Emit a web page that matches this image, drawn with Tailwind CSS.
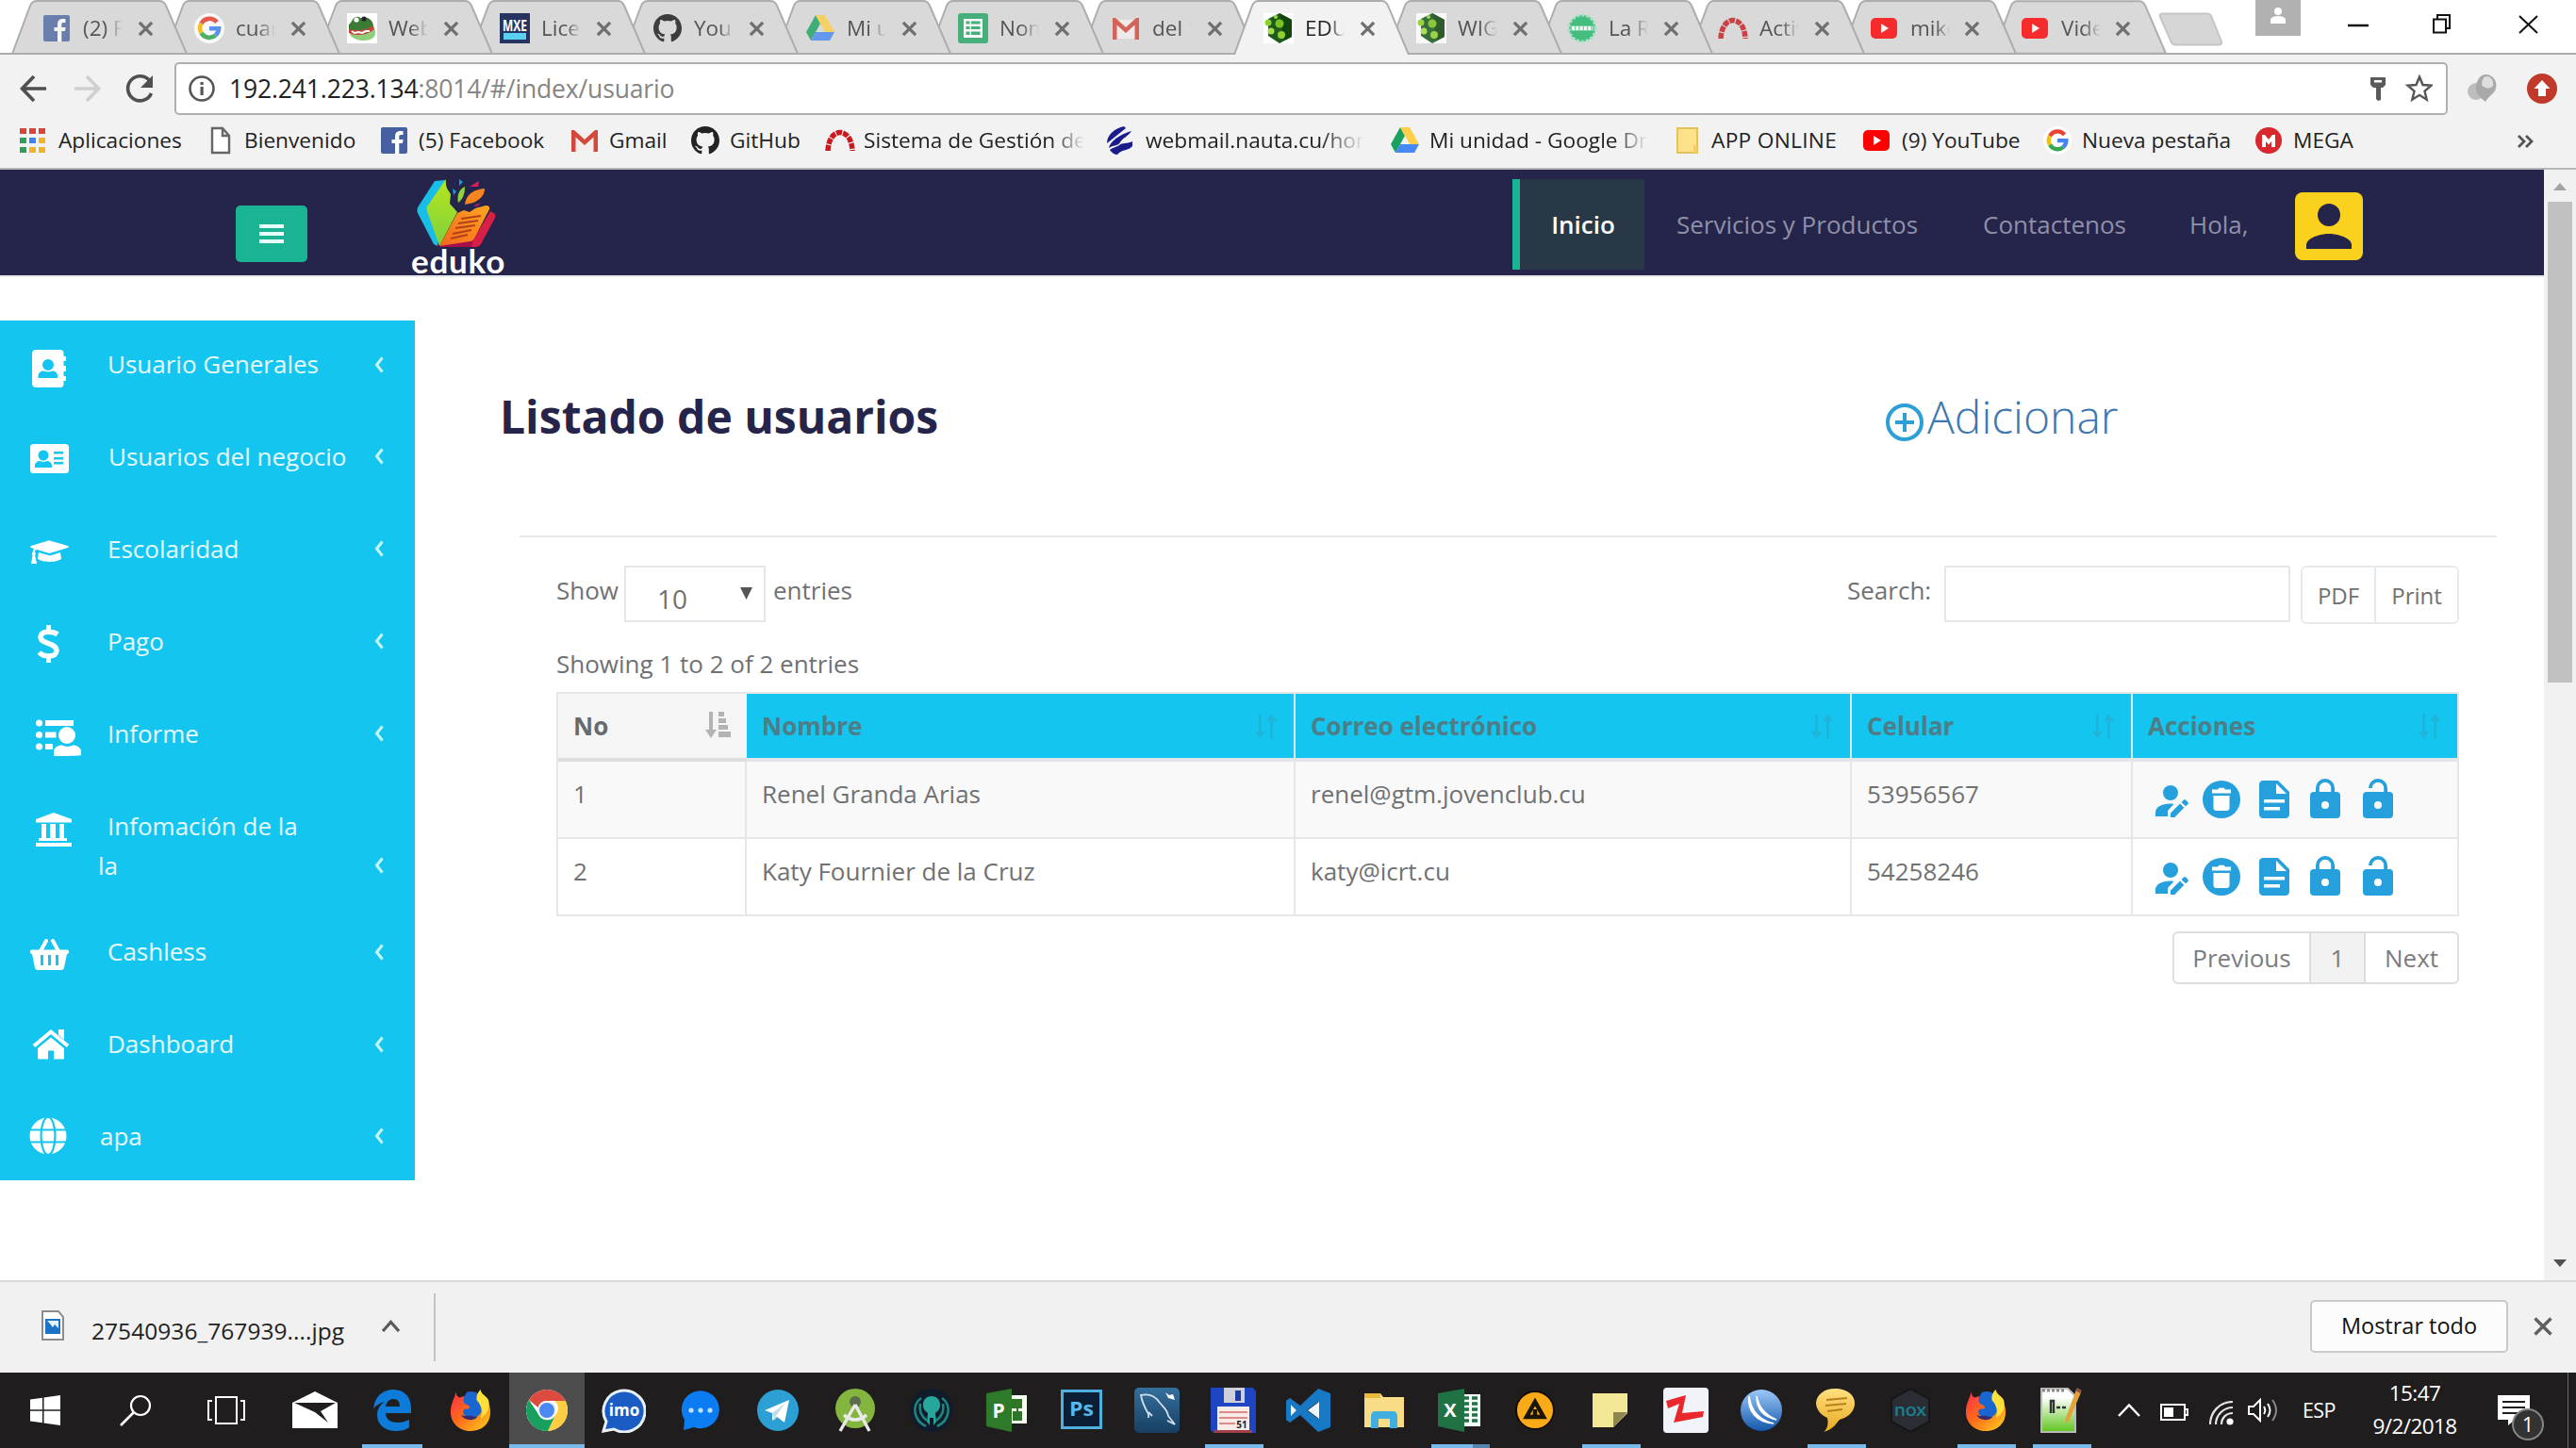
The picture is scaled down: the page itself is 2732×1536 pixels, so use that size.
<!DOCTYPE html>
<html lang="es">
<head>
<meta charset="utf-8">
<title>EDUKO</title>
<script src="https://cdn.jsdelivr.net/npm/@tailwindcss/browser@4"></script>
</head>
<body class="w-[2732px] h-[1536px] overflow-hidden bg-white font-['Open_Sans',sans-serif]">
<svg width="0" height="0" class="absolute">
  <defs>
    <linearGradient id="gFox" x1="0" y1="0" x2="1" y2="1"><stop offset="0" stop-color="#ff2a4d"/><stop offset=".45" stop-color="#ff6a1a"/><stop offset="1" stop-color="#ffd21f"/></linearGradient>
    <linearGradient id="gBlue" x1="0" y1="0" x2="0" y2="1"><stop offset="0" stop-color="#9cc8f8"/><stop offset="1" stop-color="#1458ac"/></linearGradient>
    <linearGradient id="gGold" x1="0" y1="0" x2="0" y2="1"><stop offset="0" stop-color="#ffdf80"/><stop offset="1" stop-color="#e8a91f"/></linearGradient>
    <linearGradient id="gGreen" x1="0" y1="0" x2="0" y2="1"><stop offset=".2" stop-color="#ffffff"/><stop offset="1" stop-color="#5fc51c"/></linearGradient>
    <linearGradient id="gNavy" x1="0" y1="0" x2="0" y2="1"><stop offset="0" stop-color="#356f9c"/><stop offset="1" stop-color="#173f63"/></linearGradient>
    <linearGradient id="gCyan" x1="0" y1="0" x2="0" y2="1"><stop offset="0" stop-color="#b5e61e"/><stop offset="1" stop-color="#7fd03c"/></linearGradient>
    <linearGradient id="gPage" x1="1" y1="0" x2="0" y2="1"><stop offset="0" stop-color="#ffa51f"/><stop offset="1" stop-color="#f4661c"/></linearGradient>
  </defs>
  <symbol id="tab" viewBox="0 0 188 58"><path d="M1 57 L20 6 Q22 1 27 1 H157 Q162 1 164 6 L186 57 Z" fill="#d9d9d9" stroke="#adadad" stroke-width="2"/></symbol>
  <symbol id="tabOn" viewBox="0 0 188 58"><path d="M1 58 L20 6 Q22 1 27 1 H157 Q162 1 164 6 L186 58" fill="#f2f2f2" stroke="#adadad" stroke-width="2"/></symbol>
  <symbol id="x" viewBox="0 0 18 18"><path d="M2 2 L16 16 M16 2 L2 16" stroke="#6f6f6f" stroke-width="3.4" fill="none"/></symbol>
  <symbol id="fb" viewBox="0 0 32 32"><rect x="2" y="2" width="28" height="28" rx="2" fill="#4560a0"/><path d="M17 30V19h-3.500v-4H17v-3c0-4 2-6 5.500-6 1.500 0 2.500.2 3 .3V10h-2c-1.800 0-2.200.9-2.200 2.200V15h4.300l-.6 4h-3.700v11z" fill="#fff"/></symbol>
  <symbol id="goo" viewBox="0 0 32 32"><circle cx="16" cy="16" r="16" fill="#fff"/><g fill="none" stroke-width="4.600"><path d="M24 9.500A10 10 0 0 0 7.500 11" stroke="#ea4335"/><path d="M7.500 11a10 10 0 0 0 0 10" stroke="#fbbc05"/><path d="M7.500 21A10 10 0 0 0 22.500 23.500" stroke="#34a853"/><path d="M22.500 23.500A10 10 0 0 0 26 16.200H16" stroke="#4285f4"/></g></symbol>
  <symbol id="toad" viewBox="0 0 32 32"><rect width="32" height="32" fill="#fff"/><path d="M3 23c3-3 6-2 9-3l15-6c4 3 4 9 1 12-5 4-18 5-25-3z" fill="#8fce7c"/><path d="M2 12c4-3 3-7 8-8 3-1 4 2 7 1 5-2 10 2 11 8-3 5-10 4-15 6-5 2-8 2-11 0z" fill="#3c7a35"/><path d="M2 17c8 2 18 2 26-4l1 4c-6 6-19 8-27 4z" fill="#c9453b"/><circle cx="10" cy="7" r="2.600" fill="#fff"/><circle cx="18" cy="6" r="2.600" fill="#222"/><path d="M5 19l3 2 4-1 4 1 4-2 4 0" stroke="#fff" stroke-width="2" fill="none"/></symbol>
  <symbol id="mxe" viewBox="0 0 32 32"><rect width="32" height="32" fill="#26345f"/><text x="16" y="19" font-size="16" font-weight="700" text-anchor="middle" fill="#fff" font-family="Open Sans" textLength="26" lengthAdjust="spacingAndGlyphs">MXE</text><rect x="4" y="21" width="24" height="7" fill="#59d2f2"/></symbol>
  <symbol id="git" viewBox="0 0 32 32"><path fill="currentColor" d="M16 1C7.500 1 1 7.700 1 16c0 6.600 4.300 12.300 10.300 14.300.7.100 1-.3 1-.7v-3c-4.200.9-5-1.800-5-1.800-.7-1.700-1.700-2.200-1.700-2.200-1.400-.9.100-.9.100-.9 1.500.1 2.300 1.500 2.300 1.500 1.400 2.300 3.600 1.700 4.400 1.300.1-1 .5-1.700 1-2-3.300-.4-6.800-1.700-6.800-7.400 0-1.700.6-3 1.500-4-.1-.4-.6-2 .2-4 0 0 1.300-.4 4.100 1.500a14 14 0 0 1 7.500 0c2.900-1.900 4.100-1.500 4.100-1.500.8 2 .3 3.600.1 4 1 1 1.500 2.400 1.500 4 0 5.700-3.500 7-6.800 7.400.5.500 1 1.400 1 2.800v4.200c0 .4.300.9 1 .7C26.700 28.300 31 22.600 31 16 31 7.700 24.500 1 16 1z"/></symbol>
  <symbol id="drive" viewBox="0 0 32 32"><path d="M11 2 L1 20 L6 29 L16 11z" fill="#1aa15f"/><path d="M11 2h10l10 18H21z" fill="#ffcf48"/><path d="M6 29l5-9h20l-5 9z" fill="#4688f4"/></symbol>
  <symbol id="sheet" viewBox="0 0 32 32"><rect width="32" height="32" rx="3" fill="#23a566"/><rect x="6" y="6" width="20" height="20" fill="#fff"/><path d="M8.500 8.500h4v3h-4zM14 8.500h9.500v3H14zM8.500 14h4v3h-4zM14 14h9.500v3H14zM8.500 19.500h4v3.500h-4zM14 19.500h9.500v3.500H14z" fill="#23a566"/></symbol>
  <symbol id="gmail" viewBox="0 0 32 32"><path d="M4 7h24v20H4z" fill="#f3efed"/><path d="M2 28V5h3l11 10L27 5h3v23h-4.500V12.500L16 21 6.500 12.500V28z" fill="#d4473b"/></symbol>
  <symbol id="hex" viewBox="0 0 32 32"><rect width="32" height="32" fill="#fff"/><path d="M17 0l13 7v18l-13 7-12-8V6z" fill="#1d5c1c"/><path d="M17 0l13 7v18l-8 4z" fill="#11470f"/><circle cx="5" cy="10" r="3.500" fill="#8ed12c"/><circle cx="17" cy="11" r="4.500" fill="#7cc422"/><circle cx="8" cy="19" r="3.500" fill="#a4dd4c"/><circle cx="19" cy="23" r="4" fill="#8ed12c"/><circle cx="13" cy="4" r="2" fill="#9bd84b"/></symbol>
  <symbol id="badge" viewBox="0 0 32 32"><circle cx="16" cy="16" r="14" fill="#1fb769" stroke="#9be5c0" stroke-width="3" stroke-dasharray="3 2"/><path d="M3 13h26v6H3z" fill="#5ccf93"/><path d="M5 16h22" stroke="#fff" stroke-width="4" stroke-dasharray="3 1.300"/></symbol>
  <symbol id="arc" viewBox="0 0 32 32"><path d="M3 27 C4 1 28 1 29 27" fill="none" stroke="#c9191e" stroke-width="5.500" stroke-dasharray="6 1.200"/></symbol>
  <symbol id="yt" viewBox="0 0 32 32"><rect x="2" y="5" width="28" height="22" rx="5" fill="#f00"/><path d="M13 11l8 5-8 5z" fill="#fff"/></symbol>
  <symbol id="webm" viewBox="0 0 32 32"><path d="M20 1C10 3 2 10 2 19l20-16zM28 6C20 8 6 15 4 24c4-3 10-2 12-6 3-5 8-6 12-12zM29 17c-7 3-10 1-14 4-3 2-6 2-10 5 2 3 5 5 8 5 5-6 12-4 16-9z" fill="#1a1c8c"/></symbol>
  <symbol id="mega" viewBox="0 0 32 32"><circle cx="16" cy="16" r="14" fill="#d9272e"/><path d="M9 23V10h3l4 5 4-5h3v13h-4v-6l-3 3.500-3-3.500v6z" fill="#fff"/></symbol>
  <symbol id="chev" viewBox="0 0 12 18"><path d="M9.500 1.500 L3.500 9 L9.500 16.500" fill="none" stroke="#c6f7ff" stroke-width="3"/></symbol>
  <symbol id="sort" viewBox="0 0 26 30"><path d="M6 1v22M19 29V7" stroke="currentColor" stroke-width="3.200"/><path d="M0 21h12l-6 8zM13 9h12l-6-8z" fill="currentColor"/></symbol>
  <symbol id="uedit" viewBox="0 0 36 36"><g fill="currentColor"><circle cx="16" cy="9" r="8"/><path d="M0 34v-4c0-6 7-9.500 15-9.500 1.500 0 3 .1 4.500.4L13 28v6z"/><path d="M16 35v-4.500l10-10 4.300 4.300-10 10.200zM27.500 19l2.500-2.500c.7-.7 1.500-.7 2 0l2.500 2.500c.6.600.6 1.300 0 2L32 23.300z"/></g></symbol>
  <symbol id="trash" viewBox="0 0 40 40"><circle cx="20" cy="20" r="20" fill="currentColor"/><path d="M10 9.500h6l1.500-1.800h5L24 9.500h6v4H10zM11.500 16h17v13c0 1.700-1.300 3-3 3h-11c-1.700 0-3-1.300-3-3z" fill="#fff"/></symbol>
  <symbol id="doc" viewBox="0 0 32 40"><path fill="currentColor" d="M4 0h16l12 12v24c0 2.200-1.800 4-4 4H4c-2.200 0-4-1.800-4-4V4c0-2.200 1.800-4 4-4z"/><path d="M18 3v11h11zM5 20h22v3.500H5zM5 28h17v3.500H5z" fill="#fff"/></symbol>
  <symbol id="lock" viewBox="0 0 32 42"><path fill="currentColor" fill-rule="evenodd" d="M28 14H26V10A10 10 0 0 0 6 10V14H4a4 4 0 0 0-4 4V38a4 4 0 0 0 4 4H28a4 4 0 0 0 4-4V18a4 4 0 0 0-4-4zM9.800 14V10a6.200 6.200 0 0 1 12.400 0V14zM16 32a4 4 0 1 1 0-8 4 4 0 0 1 0 8z"/></symbol>
  <symbol id="unlock" viewBox="0 0 32 42"><path fill="currentColor" fill-rule="evenodd" d="M28 14H26V10A10 10 0 0 0 6 10H9.800a6.200 6.200 0 0 1 12.400 0V14H4a4 4 0 0 0-4 4V38a4 4 0 0 0 4 4H28a4 4 0 0 0 4-4V18a4 4 0 0 0-4-4zM16 32a4 4 0 1 1 0-8 4 4 0 0 1 0 8z"/></symbol>
  <symbol id="fox" viewBox="0 0 48 48"><path d="M8 3c0 4 1 5 4 7 4-2 7-2 9 0 6-5 12-1 14 1 10 3 11 9 11 15 0 13-10 21-22 21S2 38 2 26C2 16 6 12 8 3z" fill="url(#gFox)"/><path d="M20 4c10-3 17 3 18 13 0 12-8 16-13 15-8 0-11-6-8-9 3-1 6 0 6-3-1-2-4-2-6-4-2-3 0-8 3-12z" fill="#1a66d0"/><path d="M14 29c2 6 13 8 18 2-4 1-6-1-9-1-4 0-6 1-9-1z" fill="#3a2a70"/><path d="M35 1c-3 3-5 7-4 12 5 5 7 13 4 20 8-5 11-12 9-20-2-5-8-6-9-12z" fill="#ffe03a"/></symbol>
</svg>

<div class="flex flex-col w-[2732px] h-[1536px]">

  <!-- Tab strip -->
  <div class="relative flex h-[58px] shrink-0 bg-white">
    <div class="absolute left-0 bottom-0 w-full h-[2px] bg-[#adadad]"></div>
    <div class="flex pl-[12px] text-[22.500px] text-[#555]">
      <div class="relative z-[14] w-[162px] h-[58px] shrink-0"><svg class="absolute left-0 top-0 w-[188px] h-[58px]"><use href="#tab"/></svg><div class="relative flex items-center h-[60px] pl-[32px]"><svg class="w-[32px] h-[32px] opacity-75"><use href="#fb"/></svg><span class="ml-[12px] w-[42px] overflow-hidden whitespace-nowrap [mask-image:linear-gradient(to_right,black_55%,transparent)]">(2) Fa</span><svg class="ml-[16px] w-[17px] h-[17px]"><use href="#x"/></svg></div></div>
      <div class="relative z-[13] w-[162px] h-[58px] shrink-0"><svg class="absolute left-0 top-0 w-[188px] h-[58px]"><use href="#tab"/></svg><div class="relative flex items-center h-[60px] pl-[32px]"><svg class="w-[32px] h-[32px] opacity-85"><use href="#goo"/></svg><span class="ml-[12px] w-[42px] overflow-hidden whitespace-nowrap [mask-image:linear-gradient(to_right,black_55%,transparent)]">cuan</span><svg class="ml-[16px] w-[17px] h-[17px]"><use href="#x"/></svg></div></div>
      <div class="relative z-[12] w-[162px] h-[58px] shrink-0"><svg class="absolute left-0 top-0 w-[188px] h-[58px]"><use href="#tab"/></svg><div class="relative flex items-center h-[60px] pl-[32px]"><svg class="w-[32px] h-[32px]"><use href="#toad"/></svg><span class="ml-[12px] w-[42px] overflow-hidden whitespace-nowrap [mask-image:linear-gradient(to_right,black_55%,transparent)]">Web</span><svg class="ml-[16px] w-[17px] h-[17px]"><use href="#x"/></svg></div></div>
      <div class="relative z-[11] w-[162px] h-[58px] shrink-0"><svg class="absolute left-0 top-0 w-[188px] h-[58px]"><use href="#tab"/></svg><div class="relative flex items-center h-[60px] pl-[32px]"><svg class="w-[32px] h-[32px]"><use href="#mxe"/></svg><span class="ml-[12px] w-[42px] overflow-hidden whitespace-nowrap [mask-image:linear-gradient(to_right,black_65%,transparent)]">Licen</span><svg class="ml-[16px] w-[17px] h-[17px]"><use href="#x"/></svg></div></div>
      <div class="relative z-[10] w-[162px] h-[58px] shrink-0"><svg class="absolute left-0 top-0 w-[188px] h-[58px]"><use href="#tab"/></svg><div class="relative flex items-center h-[60px] pl-[32px]"><svg class="w-[32px] h-[32px] text-[#3d3d3d]"><use href="#git"/></svg><span class="ml-[12px] w-[42px] overflow-hidden whitespace-nowrap [mask-image:linear-gradient(to_right,black_65%,transparent)]">Your</span><svg class="ml-[16px] w-[17px] h-[17px]"><use href="#x"/></svg></div></div>
      <div class="relative z-[9] w-[162px] h-[58px] shrink-0"><svg class="absolute left-0 top-0 w-[188px] h-[58px]"><use href="#tab"/></svg><div class="relative flex items-center h-[60px] pl-[32px]"><svg class="w-[32px] h-[32px] opacity-80"><use href="#drive"/></svg><span class="ml-[12px] w-[42px] overflow-hidden whitespace-nowrap [mask-image:linear-gradient(to_right,black_55%,transparent)]">Mi unidad</span><svg class="ml-[16px] w-[17px] h-[17px]"><use href="#x"/></svg></div></div>
      <div class="relative z-[8] w-[162px] h-[58px] shrink-0"><svg class="absolute left-0 top-0 w-[188px] h-[58px]"><use href="#tab"/></svg><div class="relative flex items-center h-[60px] pl-[32px]"><svg class="w-[32px] h-[32px] opacity-80"><use href="#sheet"/></svg><span class="ml-[12px] w-[42px] overflow-hidden whitespace-nowrap [mask-image:linear-gradient(to_right,black_55%,transparent)]">Nomi</span><svg class="ml-[16px] w-[17px] h-[17px]"><use href="#x"/></svg></div></div>
      <div class="relative z-[7] w-[162px] h-[58px] shrink-0"><svg class="absolute left-0 top-0 w-[188px] h-[58px]"><use href="#tab"/></svg><div class="relative flex items-center h-[60px] pl-[32px]"><svg class="w-[32px] h-[32px] opacity-80"><use href="#gmail"/></svg><span class="ml-[12px] w-[42px] overflow-hidden whitespace-nowrap [mask-image:linear-gradient(to_right,black_75%,transparent)]">del 1</span><svg class="ml-[16px] w-[17px] h-[17px]"><use href="#x"/></svg></div></div>
      <div class="relative z-[20] w-[162px] h-[58px] shrink-0 text-[#222]"><svg class="absolute left-0 top-0 w-[188px] h-[58px]"><use href="#tabOn"/></svg><div class="relative flex items-center h-[60px] pl-[32px]"><svg class="w-[32px] h-[32px]"><use href="#hex"/></svg><span class="ml-[12px] w-[42px] overflow-hidden whitespace-nowrap [mask-image:linear-gradient(to_right,black_60%,transparent)]">EDUKO</span><svg class="ml-[16px] w-[17px] h-[17px]"><use href="#x"/></svg></div></div>
      <div class="relative z-[5] w-[160px] h-[58px] shrink-0"><svg class="absolute left-0 top-0 w-[188px] h-[58px]"><use href="#tab"/></svg><div class="relative flex items-center h-[60px] pl-[32px]"><svg class="w-[32px] h-[32px] opacity-85"><use href="#hex"/></svg><span class="ml-[12px] w-[42px] overflow-hidden whitespace-nowrap [mask-image:linear-gradient(to_right,black_55%,transparent)]">WIG</span><svg class="ml-[16px] w-[17px] h-[17px]"><use href="#x"/></svg></div></div>
      <div class="relative z-[4] w-[161px] h-[58px] shrink-0"><svg class="absolute left-0 top-0 w-[188px] h-[58px]"><use href="#tab"/></svg><div class="relative flex items-center h-[60px] pl-[32px]"><svg class="w-[32px] h-[32px] opacity-80"><use href="#badge"/></svg><span class="ml-[12px] w-[42px] overflow-hidden whitespace-nowrap [mask-image:linear-gradient(to_right,black_55%,transparent)]">La Re</span><svg class="ml-[16px] w-[17px] h-[17px]"><use href="#x"/></svg></div></div>
      <div class="relative z-[3] w-[161px] h-[58px] shrink-0"><svg class="absolute left-0 top-0 w-[188px] h-[58px]"><use href="#tab"/></svg><div class="relative flex items-center h-[60px] pl-[31px]"><svg class="w-[32px] h-[32px] opacity-80"><use href="#arc"/></svg><span class="ml-[12px] w-[42px] overflow-hidden whitespace-nowrap [mask-image:linear-gradient(to_right,black_55%,transparent)]">Activ</span><svg class="ml-[16px] w-[17px] h-[17px]"><use href="#x"/></svg></div></div>
      <div class="relative z-[2] w-[161px] h-[58px] shrink-0"><svg class="absolute left-0 top-0 w-[188px] h-[58px]"><use href="#tab"/></svg><div class="relative flex items-center h-[60px] pl-[30px]"><svg class="w-[32px] h-[32px] opacity-80"><use href="#yt"/></svg><span class="ml-[12px] w-[42px] overflow-hidden whitespace-nowrap [mask-image:linear-gradient(to_right,black_65%,transparent)]">mike</span><svg class="ml-[15px] w-[17px] h-[17px]"><use href="#x"/></svg></div></div>
      <div class="relative z-[1] w-[161px] h-[58px] shrink-0"><svg class="absolute left-0 top-0 w-[186px] h-[58px]"><use href="#tab"/></svg><div class="relative flex items-center h-[60px] pl-[29px]"><svg class="w-[32px] h-[32px] opacity-80"><use href="#yt"/></svg><span class="ml-[12px] w-[42px] overflow-hidden whitespace-nowrap [mask-image:linear-gradient(to_right,black_55%,transparent)]">Vide</span><svg class="ml-[15px] w-[17px] h-[17px]"><use href="#x"/></svg></div></div>
    </div>
    <svg class="ml-[15px] mt-[13px] w-[70px] h-[36px] shrink-0" viewBox="0 0 70 36"><path d="M4 1.500H52Q55 1.500 56.500 5L67 31Q68 34.500 64 34.500H18Q15 34.500 13.500 31L2 5Q1 1.500 4 1.500z" fill="#d6d6d6" stroke="#c6c6c6" stroke-width="2"/></svg>
    <div class="ml-[33px] w-[48px] h-[38px] bg-[#b1b1b1] flex justify-center pt-[8px] shrink-0"><svg class="w-[16px] h-[17px]" viewBox="0 0 16 17"><circle cx="8" cy="4" r="4" fill="#fff"/><path d="M0 17v-4c0-3 5-4 8-4s8 1 8 4v4z" fill="#fff"/></svg></div>
    <svg class="absolute left-[2488px] top-[14px] w-[210px] h-[24px]" viewBox="0 0 210 24"><g fill="none" stroke="#111" stroke-width="2"><path d="M2 13h22" stroke-width="2.500"/><path d="M93 6.500h13v14H93z"/><path d="M97 6V2h13v14h-4"/><path d="M184 3l19 18M203 3l-19 18"/></g></svg>
  </div>

  <!-- Address bar -->
  <div class="flex items-center h-[72px] shrink-0 bg-[#f2f2f2]">
    <svg class="w-[185px] h-[72px] shrink-0" viewBox="0 0 185 72"><g fill="none" stroke-width="3.600"><path d="M49 36H24M36 23 L23.500 36 L36 49" stroke="#505050"/><path d="M79 36h25M92 23l12.500 13L92 49" stroke="#cfcfcf"/><path d="M159 28A13 13 0 1 0 160.500 41" stroke="#505050"/></g><path d="M162 22v13h-13z" fill="#505050"/></svg>
    <div class="flex items-center w-[2411px] h-[56px] bg-white border-2 border-[#b0b0b0] rounded-[5px]">
      <svg class="ml-[13px] w-[28px] h-[28px]" viewBox="0 0 28 28"><circle cx="14" cy="14" r="12.500" fill="none" stroke="#555" stroke-width="2.600"/><path d="M12.500 7h3.200v3h-3.200zM12.500 12h3.200v9h-3.200z" fill="#555"/></svg>
      <span class="ml-[15px] pt-[2px] text-[26.500px] tracking-[-0.150px] text-[#222] whitespace-nowrap">192.241.223.134<span class="text-[#858585]">:8014/#/index/usuario</span></span>
      <svg class="ml-auto mr-[14px] w-[68px] h-[30px]" viewBox="0 0 68 30"><path d="M2 3h16v8l-3 3H5l-3-3zM8 14h5v13l-3 1-2-2z" fill="#5a5a5a"/><path d="M6 6h8v2.500H6z" fill="#fff"/><path d="M54 2.500l3.500 8.500 9 .7-7 6 2.200 9L54 21.800l-7.700 4.900 2.200-9-7-6 9-.7z" fill="none" stroke="#555" stroke-width="2.400"/></svg>
    </div>
    <svg class="ml-[20px] w-[34px] h-[34px]" viewBox="0 0 34 34"><circle cx="10" cy="20" r="9" fill="#bdbdbd"/><path d="M20 2c8 0 13 7 11 15-2 6-8 8-11 14-6-5-11-9-10-17 1-7 5-12 10-12z" fill="#a9a9a9"/><path d="M21 4c5 0 8 5 7 10-4 4-9 3-12-1 0-5 2-9 5-9z" fill="#dedede"/></svg>
    <svg class="ml-[29px] w-[34px] h-[34px]" viewBox="0 0 34 34"><circle cx="17" cy="17" r="16" fill="#c0392b"/><path d="M17 8l8.500 9H21v8h-8v-8H8.500z" fill="#fff"/></svg>
  </div>

  <!-- Bookmarks -->
  <div class="flex items-center h-[50px] pb-[9px] box-border shrink-0 bg-[#f2f2f2] border-b-2 border-[#b8b6ba] pl-[20px] text-[22.700px] text-[#222] whitespace-nowrap">
    <div class="flex items-center w-[198px] shrink-0"><svg class="w-[30px] h-[28px] mr-[12px]" viewBox="0 0 30 28"><path d="M1 1h7v6H1zM11 1h7v6h-7zM21 1h7v6h-7z" fill="#d9453d"/><path d="M1 11h7v6H1z" fill="#2e9e5b"/><path d="M11 11h7v6h-7z" fill="#3a85f0"/><path d="M21 11h7v6h-7z" fill="#f0b429"/><path d="M1 21h7v6H1z" fill="#2e9e5b"/><path d="M11 21h7v6h-7zM21 21h7v6h-7z" fill="#f0b429"/></svg>Aplicaciones</div>
    <div class="flex items-center w-[184px] shrink-0"><svg class="w-[32px] h-[30px] mr-[9px]" viewBox="0 0 32 30"><path d="M7 2h11l7 8v18H7zM18 2v8h7" fill="#fff" stroke="#666" stroke-width="2.400"/></svg>Bienvenido</div>
    <div class="flex items-center w-[202px] shrink-0"><svg class="w-[32px] h-[32px] mr-[10px]"><use href="#fb"/></svg>(5) Facebook</div>
    <div class="flex items-center w-[128px] shrink-0"><svg class="w-[32px] h-[32px] mr-[10px]"><use href="#gmail"/></svg>Gmail</div>
    <div class="flex items-center w-[143px] shrink-0"><svg class="w-[32px] h-[32px] mr-[10px]"><use href="#git"/></svg>GitHub</div>
    <div class="flex items-center w-[297px] shrink-0"><svg class="w-[32px] h-[32px] mr-[9px]"><use href="#arc"/></svg><span class="w-[234px] overflow-hidden [mask-image:linear-gradient(to_right,black_85%,transparent)]">Sistema de Gestión de</span></div>
    <div class="flex items-center w-[302px] shrink-0"><svg class="w-[32px] h-[32px] mr-[11px]"><use href="#webm"/></svg><span class="w-[232px] overflow-hidden [mask-image:linear-gradient(to_right,black_80%,transparent)]">webmail.nauta.cu/hom</span></div>
    <div class="flex items-center w-[299px] shrink-0"><svg class="w-[32px] h-[32px] mr-[10px]"><use href="#drive"/></svg><span class="w-[231px] overflow-hidden [mask-image:linear-gradient(to_right,black_85%,transparent)]">Mi unidad - Google Dr</span></div>
    <div class="flex items-center w-[201px] shrink-0"><svg class="w-[32px] h-[30px] mr-[10px]" viewBox="0 0 32 30"><path d="M6 2h21v26H6z" fill="#fde28a" stroke="#e2c35b" stroke-width="2"/><path d="M23 20h4v8h-4z" fill="#f2cf66"/></svg><span class="tracking-[0.300px]">APP ONLINE</span></div>
    <div class="flex items-center w-[193px] shrink-0"><svg class="w-[32px] h-[32px] mr-[11px]"><use href="#yt"/></svg>(9) YouTube</div>
    <div class="flex items-center w-[223px] shrink-0"><svg class="w-[30px] h-[30px] mr-[11px]"><use href="#goo"/></svg>Nueva pestaña</div>
    <div class="flex items-center w-[280px] shrink-0"><svg class="w-[32px] h-[32px] mr-[10px]"><use href="#mega"/></svg>MEGA</div>
    <svg class="w-[18px] h-[14px]" viewBox="0 0 18 14"><path d="M1 1l6 6-6 6M9 1l6 6-6 6" fill="none" stroke="#555" stroke-width="2.800"/></svg>
  </div>

  <!-- Page -->
  <div class="flex h-[1178px] shrink-0">
    <div class="w-[2698px] shrink-0">
      <!-- Navbar -->
      <div class="flex h-[112px] bg-[#25244b] text-[26px] text-[#8f90a8]">
        <div class="ml-[250px] mt-[38px] w-[76px] h-[60px] rounded-[5px] bg-[#1ab394] flex items-center justify-center"><svg class="w-[26px] h-[22px]" viewBox="0 0 26 22"><path d="M0 3h26M0 11h26M0 19h26" stroke="#e6fffa" stroke-width="3.800"/></svg></div>
        <div class="ml-[108px] w-[104px] flex flex-col items-center pt-[8px]">
          <svg class="w-[88px] h-[76px] shrink-0" viewBox="0 0 88 76"><path d="M19 4L30 3 24 60 22 73 18 71 1 38Q0 35 1 32z" fill="#18bde8"/><path d="M31 2C30 12 34 14 36 18L35 28 43 37 24 73 11 36Q10 33 11 31z" fill="url(#gCyan)"/><path d="M24 73L60 66 78 36 83 39Q84 42 82 45L68 71Q66 74 63 74H26z" fill="#d81f45"/><path d="M24 73l36-7-2 8H26z" fill="#a80f4a"/><path d="M24 73L43 38 50 35 56 37 62 33 73 30Q78 30 77 34L61 65Q60 67 57 68z" fill="url(#gPage)"/><path d="M47 44l21-3M44 49l21-3M41 54l21-3M38 60l20-4M36 65l18-4" stroke="#b2401a" stroke-width="1.800"/><path d="M51 29C52 20 58 13 72 12C72 20 66 24 60 27z" fill="#f5851f"/><path d="M56 10L66 4 65 10z" fill="#d81f60"/><path d="M44 27C42 18 46 12 51 10 51 18 49 23 44 27z" fill="#8fd43a"/><path d="M45 2l4 3-4 4zM38 12l4 3-3 4z" fill="#1c9be0"/><path d="M60 30l8-3-4 4z" fill="#c01f70"/></svg>
          <div class="h-[28px] -mt-[4px] text-[35px] leading-[33px] font-bold text-white font-['Lato',sans-serif] tracking-[0.800px]">eduko</div>
        </div>
        <div class="ml-[1066px] mt-[10px] w-[140px] h-[96px] border-l-8 border-[#1ab394] bg-[#293846] flex items-center justify-center font-semibold text-white pl-[2px]">Inicio</div>
        <div class="w-[359px] pl-[34px] pt-[40px] leading-[36px] shrink-0">Servicios y Productos</div>
        <div class="w-[219px] pt-[40px] leading-[36px] shrink-0">Contactenos</div>
        <div class="w-[112px] pt-[40px] leading-[36px] shrink-0">Hola,</div>
        <svg class="mt-[24px] w-[72px] h-[72px] shrink-0" viewBox="0 0 72 72"><rect width="72" height="72" rx="8" fill="#fad21e"/><circle cx="36" cy="24" r="12" fill="#25244b"/><path d="M12 60v-4c0-8 16-12 24-12s24 4 24 12v4z" fill="#25244b"/></svg>
      </div>
      <div class="h-[2px] bg-[#e7eaec]"></div>

      <div class="flex">
        <!-- Sidebar -->
        <div class="mt-[46px] w-[440px] h-[912px] shrink-0 bg-[#13c5ef] text-[26px] text-white/90">
          <div class="flex items-center h-[96px]"><svg class="ml-[34px] mr-[44px] mt-[6px] w-[36px] h-[40px]" viewBox="0 0 36 40"><path fill="#fff" fill-rule="evenodd" d="M4 0h26c2 0 3.500 1.500 3.500 3.500V7H36v5h-2.500v5H36v6h-2.500v5H36v5h-2.500v3.500c0 2-1.500 3.500-3.500 3.500H4c-2 0-4-1.500-4-4V4c0-2.500 2-4 4-4zM17 10a6 6 0 1 0 0 12 6 6 0 0 0 0-12zM6.500 30h20.500v-2.500c0-3-2.500-5-5.500-5-1 0-2 1-4.500 1s-3.500-1-4.500-1c-3 0-6 2-6 5z"/></svg><span class="flex-1 pb-[3px]">Usuario Generales</span><svg class="mr-[32px] mb-[3px] w-[12px] h-[18px]"><use href="#chev"/></svg></div>
          <div class="flex items-center h-[98px]"><svg class="ml-[32px] mr-[42px] mt-[3px] w-[41px] h-[31px]" viewBox="0 0 41 31"><rect width="41" height="31" rx="3.500" fill="#fff"/><circle cx="14" cy="12" r="5.500" fill="#13c5ef"/><path d="M5 25v-2c0-3 3-5 5-5 1 0 2 1 4 1s3-1 4-1c2 0 5 2 5 5v2zM25 8h10v2.500H25zM25 14h10v2.500H25zM25 19h10v2.500H25z" fill="#13c5ef"/></svg><span class="flex-1 pb-[2px]">Usuarios del negocio</span><svg class="mr-[32px] mb-[2px] w-[12px] h-[18px]"><use href="#chev"/></svg></div>
          <div class="flex items-center h-[98px]"><svg class="ml-[32px] mr-[41px] mt-[5px] w-[41px] h-[25px]" viewBox="0 0 41 25"><path fill="#fff" d="M20 0.200L40 6c1.200.4 1.200 1.600 0 2L22 13.400c-1 .3-2 .3-3 0L7 10c-2 .5-2 2-2 3 1 .8 1 2 .2 3L7 25H1l1.500-9c-.8-1-.8-2 .2-3 0-1.500.5-2.800 1.600-3.800L1 8c-1.200-.4-1.200-1.600 0-2zM9 13l10.500 3c1 .3 2 .3 3 0L32 13l1 6.500C30 24 11 24 8 19.500z"/></svg><span class="flex-1 pb-[2px]">Escolaridad</span><svg class="mr-[32px] mb-[2px] w-[12px] h-[18px]"><use href="#chev"/></svg></div>
          <div class="flex items-center h-[98px]"><svg class="ml-[39px] mr-[50px] mt-[3px] w-[25px] h-[40px]" viewBox="0 0 25 40"><path d="M12.500 0v7M12.500 33v7" stroke="#fff" stroke-width="5"/><path d="M22 10C18 7 5 5 4 12.500 4 21 21 18 21 27.500 20 35 7 34 2.500 29" fill="none" stroke="#fff" stroke-width="5.500"/></svg><span class="flex-1 pb-[2px]">Pago</span><svg class="mr-[32px] mb-[2px] w-[12px] h-[18px]"><use href="#chev"/></svg></div>
          <div class="flex items-center h-[98px]"><svg class="ml-[38px] mr-[27px] mt-[6px] w-[49px] h-[39px]" viewBox="0 0 49 39"><g fill="#fff"><circle cx="3.500" cy="4" r="3.500"/><circle cx="3.500" cy="16.500" r="3.500"/><circle cx="3.500" cy="29" r="3.500"/><path d="M10 1h30v6H10zM10 13.500h11.500v6H10zM10 26h8v6h-8zM19 38v-4c0-4 5-6.500 8-6.500 2 0 3.500 1.500 6.500 1.500s4.500-1.500 6.500-1.500c3 0 8 2.500 8 6.500v4c0 1-27 1-29 1z"/><circle cx="33" cy="17" r="9"/></g></svg><span class="flex-1 pb-[2px]">Informe</span><svg class="mr-[32px] mb-[2px] w-[12px] h-[18px]"><use href="#chev"/></svg></div>
          <div class="flex h-[134px]"><svg class="ml-[37px] mr-[27px] mt-[34px] w-[40px] h-[36px] shrink-0" viewBox="0 0 40 36"><path fill="#fff" d="M20 0l19 7v3.500H1V7zM7 12h5v15h4V12h6v15h4V12h5v15h3v3H4v-3h3zM1 32h38v4H1z"/></svg><div class="flex-1 leading-[42px] pt-[27px] indent-[10px]">Infomación de la<br>la</div><svg class="mr-[32px] mt-[81px] w-[12px] h-[18px]"><use href="#chev"/></svg></div>
          <div class="flex items-center h-[98px]"><svg class="ml-[32px] mr-[41px] mt-[2px] w-[41px] h-[33px]" viewBox="0 0 41 33"><path d="M11 13L17 2M30 13L24 2" stroke="#fff" stroke-width="4" stroke-linecap="round"/><path fill="#fff" fill-rule="evenodd" d="M1.500 11.500h38c2 0 2 4.500 0 4.500H39l-3 14.500c-.3 1.500-1.300 2.500-3 2.500H8c-1.700 0-2.700-1-3-2.500L2 16h-.5c-2 0-2-4.500 0-4.500zM11 17v11h3V17zM19 17v11h3V17zM27 17v11h3V17z"/></svg><span class="flex-1 pb-[3px]">Cashless</span><svg class="mr-[32px] mb-[3px] w-[12px] h-[18px]"><use href="#chev"/></svg></div>
          <div class="flex items-center h-[98px]"><svg class="ml-[34px] mr-[39px] mb-[3px] w-[41px] h-[33px]" viewBox="0 0 41 33"><path d="M2 18.500L20 3.500 38 18.500" fill="none" stroke="#fff" stroke-width="4"/><path fill="#fff" d="M28 1h6v11l-6-5zM20 9.500l14 11.500v10c0 1-.6 1.500-1.500 1.500H23v-9h-6v9H7.500c-1 0-1.500-.6-1.500-1.500V21z"/></svg><span class="flex-1 pb-[3px]">Dashboard</span><svg class="mr-[32px] mb-[2px] w-[12px] h-[18px]"><use href="#chev"/></svg></div>
          <div class="flex items-center h-[94px]"><svg class="ml-[31px] mr-[35px] w-[40px] h-[40px]" viewBox="0 0 40 40"><circle cx="20" cy="20" r="19.500" fill="#fff"/><g fill="none" stroke="#13c5ef" stroke-width="2.200"><ellipse cx="20" cy="20" rx="7.500" ry="20"/><path d="M0 13.500h40M0 26.500h40"/></g></svg><span class="flex-1 pt-[1px]">apa</span><svg class="mr-[32px] w-[12px] h-[18px]"><use href="#chev"/></svg></div>
        </div>

        <!-- Content -->
        <div class="flex-1 text-[26px] text-[#6f7173]">
          <div class="flex pt-[115px] h-[274px] text-[48px] leading-[66px]">
            <h1 class="ml-[90px] w-[1470px] font-bold text-[#25244b]">Listado de usuarios</h1>
            <svg class="mt-[19px] mr-[4px] w-[40px] h-[40px]" viewBox="0 0 40 40"><circle cx="20" cy="20" r="18" fill="none" stroke="#2c9fd6" stroke-width="4"/><path d="M20 10v20M10 20h20" stroke="#2c9fd6" stroke-width="4"/></svg>
            <a class="font-light text-[#3f77b0]">Adicionar</a>
          </div>
          <div class="ml-[111px] w-[2097px] h-[2px] bg-[#e7eaec]"></div>

          <div class="ml-[150px] w-[2018px]">
            <div class="flex h-[90px] pt-[30px] leading-[52px]">
              <span class="w-[72px]">Show</span>
              <div class="flex items-center w-[150px] h-[60px] border-2 border-[#e5e6e7] pl-[33px] pt-[10px] text-[28px]">10<svg class="ml-auto mr-[12px] mb-[12px] w-[13px] h-[13px]" viewBox="0 0 13 13"><path d="M0 0h13L6.500 13z" fill="#555"/></svg></div>
              <span class="ml-[8px]">entries</span>
              <span class="ml-auto w-[103px]">Search:</span>
              <div class="w-[367px] h-[60px] border-2 border-[#e5e6e7] rounded-[2px]"></div>
              <div class="flex ml-[11px] h-[62px] border-2 border-[#e7eaec] rounded-[6px] text-[24px] leading-[60px] text-center"><span class="w-[78px] border-r-2 border-[#e7eaec]">PDF</span><span class="w-[86px]">Print</span></div>
            </div>
            <div class="h-[74px] pt-[20px] leading-[48px]">Showing 1 to 2 of 2 entries</div>

            <div class="grid grid-cols-[200px_582px_590px_298px_346px] border-t-2 border-l-2 border-[#e7e7e9] text-[26px]">
              <div class="flex items-center h-[72px] pl-[16px] pr-[16px] bg-[#f5f5f6] border-b-4 border-[#dddde0] font-bold text-[#676a6c]">No<svg class="ml-auto mb-[2px] w-[28px] h-[28px]" viewBox="0 0 28 28"><path d="M6 0v20" stroke="#b3b3b5" stroke-width="4"/><path d="M0 19h12l-6 9zM14 0h6v5h-6zM14 7h8v5h-8zM14 14h10v5H14zM14 21h13v6H14z" fill="#b3b3b5"/></svg></div>
              <div class="flex items-center h-[72px] pl-[16px] pr-[17px] bg-[#13c5ef] border-b-4 border-r-2 border-[#e2e6ea] font-bold text-[#4f7d87]">Nombre<svg class="ml-auto w-[24px] h-[29px] text-[#22b3d8]"><use href="#sort"/></svg></div>
              <div class="flex items-center h-[72px] pl-[16px] pr-[17px] bg-[#13c5ef] border-b-4 border-r-2 border-[#e2e6ea] font-bold text-[#4f7d87]">Correo electrónico<svg class="ml-auto w-[24px] h-[29px] text-[#22b3d8]"><use href="#sort"/></svg></div>
              <div class="flex items-center h-[72px] pl-[16px] pr-[17px] bg-[#13c5ef] border-b-4 border-r-2 border-[#e2e6ea] font-bold text-[#4f7d87]">Celular<svg class="ml-auto w-[24px] h-[29px] text-[#22b3d8]"><use href="#sort"/></svg></div>
              <div class="flex items-center h-[72px] pl-[16px] pr-[17px] bg-[#13c5ef] border-b-4 border-r-2 border-[#e2e6ea] font-bold text-[#4f7d87]">Acciones<svg class="ml-auto w-[24px] h-[29px] text-[#22b3d8]"><use href="#sort"/></svg></div>

              <div class="h-[82px] pl-[16px] leading-[69px] bg-[#f9f9f9] border-b-2 border-r-2 border-[#e7e7e9]">1</div>
              <div class="h-[82px] pl-[16px] leading-[69px] bg-[#f9f9f9] border-b-2 border-r-2 border-[#e7e7e9]">Renel Granda Arias</div>
              <div class="h-[82px] pl-[16px] leading-[69px] bg-[#f9f9f9] border-b-2 border-r-2 border-[#e7e7e9]">renel@gtm.jovenclub.cu</div>
              <div class="h-[82px] pl-[16px] leading-[69px] bg-[#f9f9f9] border-b-2 border-r-2 border-[#e7e7e9]">53956567</div>
              <div class="flex h-[82px] pl-[24px] pt-[18px] bg-[#f9f9f9] border-b-2 border-r-2 border-[#e7e7e9] text-[#26a0dc]"><svg class="mt-[6px] w-[36px] h-[36px]"><use href="#uedit"/></svg><svg class="ml-[14px] mt-[2px] w-[40px] h-[40px]"><use href="#trash"/></svg><svg class="ml-[20px] mt-[2px] w-[32px] h-[40px]"><use href="#doc"/></svg><svg class="ml-[22px] w-[32px] h-[42px]"><use href="#lock"/></svg><svg class="ml-[24px] w-[32px] h-[42px]"><use href="#unlock"/></svg></div>

              <div class="h-[82px] pl-[16px] leading-[69px] border-b-2 border-r-2 border-[#e7e7e9]">2</div>
              <div class="h-[82px] pl-[16px] leading-[69px] border-b-2 border-r-2 border-[#e7e7e9]">Katy Fournier de la Cruz</div>
              <div class="h-[82px] pl-[16px] leading-[69px] border-b-2 border-r-2 border-[#e7e7e9]">katy@icrt.cu</div>
              <div class="h-[82px] pl-[16px] leading-[69px] border-b-2 border-r-2 border-[#e7e7e9]">54258246</div>
              <div class="flex h-[82px] pl-[24px] pt-[18px] border-b-2 border-r-2 border-[#e7e7e9] text-[#26a0dc]"><svg class="mt-[6px] w-[36px] h-[36px]"><use href="#uedit"/></svg><svg class="ml-[14px] mt-[2px] w-[40px] h-[40px]"><use href="#trash"/></svg><svg class="ml-[20px] mt-[2px] w-[32px] h-[40px]"><use href="#doc"/></svg><svg class="ml-[22px] w-[32px] h-[42px]"><use href="#lock"/></svg><svg class="ml-[24px] w-[32px] h-[42px]"><use href="#unlock"/></svg></div>
            </div>

            <div class="flex justify-end mt-[16px]">
              <div class="flex w-[304px] h-[56px] border-2 border-[#ddd] rounded-[6px] leading-[52px] text-center text-[#7a7c7e] overflow-hidden"><span class="w-[145px] border-r-2 border-[#ddd]">Previous</span><span class="w-[58px] border-r-2 border-[#ddd] bg-[#f2f2f2]">1</span><span class="flex-1">Next</span></div>
            </div>
          </div>
        </div>
      </div>
    </div>
    <!-- Scrollbar -->
    <div class="flex flex-col items-center w-[34px] h-[1178px] bg-[#f1f1f1]">
      <svg class="w-[14px] h-[8px] mt-[14px] shrink-0" viewBox="0 0 14 8"><path d="M0 8L7 0l7 8z" fill="#a3a3a3"/></svg>
      <div class="mt-[12px] w-[26px] h-[510px] bg-[#c1c1c1]"></div>
      <svg class="w-[14px] h-[8px] mt-auto mb-[14px] shrink-0" viewBox="0 0 14 8"><path d="M0 0l7 8 7-8z" fill="#505050"/></svg>
    </div>
  </div>

  <!-- Downloads -->
  <div class="flex items-center h-[98px] shrink-0 bg-[#f1f1f1] border-t-2 border-[#d9d9d9] text-[24px] text-[#222]">
    <svg class="ml-[43px] mb-[4px] w-[26px] h-[32px]" viewBox="0 0 26 32"><path d="M2 1h17l5 6v24H2z" fill="#fff" stroke="#8c8c8c" stroke-width="2"/><path d="M5 9h16v16H5z" fill="#1b74c5"/><path d="M7 11h12v8l-4-4-2 3-4-5z" fill="#e8f4ff"/></svg>
    <span class="ml-[28px] mt-[8px] w-[307px] text-[24.500px] tracking-[0.050px]">27540936_767939....jpg</span>
    <svg class="mb-[4px] w-[21px] h-[13px]" viewBox="0 0 21 13"><path d="M2 12l8.500-9.500L19 12" fill="none" stroke="#5a5a5a" stroke-width="3.200"/></svg>
    <div class="ml-[35px] w-[2px] h-[72px] bg-[#c2c2c2]"></div>
    <div class="ml-auto mb-[2px] w-[210px] h-[56px] border-2 border-[#c9c9c9] rounded-[5px] bg-[#fcfcfc] flex items-center justify-center text-[23.500px] text-[#111]">Mostrar todo</div>
    <svg class="ml-[27px] mr-[25px] mb-[2px] w-[20px] h-[20px]" viewBox="0 0 20 20"><path d="M1.500 1.500l17 17M18.500 1.500l-17 17" stroke="#5f5f5f" stroke-width="3.400"/></svg>
  </div>

  <!-- Taskbar -->
  <div class="relative flex h-[80px] shrink-0 bg-[#1f1d1e] text-white">
    <div class="w-[96px] flex items-center justify-center"><svg class="w-[32px] h-[32px]" viewBox="0 0 32 32"><path d="M0 4.500L13 2.700V15.200H0zM14.500 2.500L32 0V15.200H14.500zM0 16.800H13V29.300L0 27.500zM14.500 16.800H32V32L14.500 29.500z" fill="#fff"/></svg></div>
    <div class="w-[96px] flex items-center justify-center"><svg class="w-[34px] h-[34px]" viewBox="0 0 34 34"><circle cx="22" cy="12" r="10" fill="none" stroke="#fff" stroke-width="2.200"/><path d="M15 19L1 33" stroke="#fff" stroke-width="2.600"/></svg></div>
    <div class="w-[96px] flex items-center justify-center"><svg class="w-[40px] h-[30px]" viewBox="0 0 40 30"><path d="M9 1h22v28H9zM5 5H1v20h4M35 5h4v20h-4" fill="none" stroke="#fff" stroke-width="2"/></svg></div>
    <div class="w-[86px] flex items-center justify-center"><svg class="w-[48px] h-[40px] ml-[6px]" viewBox="0 0 48 40"><path d="M0 12L24 0l24 12v27H0z" fill="#fff"/><path d="M2 12h44L30 21l8 12-14-11z" fill="#1f1d1e"/></svg></div>
    <div class="relative w-[84px] flex items-center justify-center"><svg class="w-[42px] h-[44px]" viewBox="0 0 42 44"><path d="M1 20C3 6 12 0 22 0c13 0 19 9 19 20v5H14c0 7 6 10 13 10 4 0 8-1 12-3v8c-4 3-9 4-14 4C13 44 5 37 5 27c0-6 3-11 8-14-5 1-9 4-12 7zM14 18h15c0-5-2-8-7-8-4 0-7 3-8 8z" fill="#0f7bd8"/></svg><div class="absolute left-[10px] bottom-0 w-[64px] h-[4px] bg-[#76b9ed]"></div></div>
    <div class="w-[82px] flex items-center justify-center"><svg class="w-[46px] h-[48px]"><use href="#fox"/></svg></div>
    <div class="relative w-[80px] flex items-center justify-center bg-[#4e4d4e]"><svg class="w-[46px] h-[46px]" viewBox="0 0 46 46"><circle cx="23" cy="23" r="22" fill="#fff"/><path d="M3.900 12A22 22 0 0 1 42.600 13H23a10 10 0 0 0-9.400 7z" fill="#dd4b3e"/><path d="M42.600 13A22 22 0 0 1 24 45L32 28a10 10 0 0 0-1-15z" fill="#ffcd42"/><path d="M3.900 12A22 22 0 0 0 24 45L31.500 29A10 10 0 0 1 14 27z" fill="#1aa05e"/><circle cx="23" cy="23" r="10" fill="#f2f2f2"/><circle cx="23" cy="23" r="8" fill="#4a88f4"/></svg><div class="absolute left-0 bottom-0 w-[80px] h-[4px] bg-[#76b9ed]"></div></div>
    <div class="w-[82px] flex items-center justify-center"><svg class="w-[48px] h-[48px]" viewBox="0 0 48 48"><path d="M3 46l3-10A22 22 0 1 1 14 44z" fill="#1a5bc4" stroke="#e8f0fa" stroke-width="3"/><text x="25" y="30" font-size="17" font-weight="700" fill="#fff" text-anchor="middle" font-family="Open Sans">imo</text></svg></div>
    <div class="w-[82px] flex items-center justify-center"><svg class="w-[42px] h-[44px]" viewBox="0 0 42 44"><path d="M3 43l1-11A20 20 0 1 1 14 40z" fill="#0b7cf2"/><g fill="#bfe0ff"><circle cx="11" cy="22" r="2.600"/><circle cx="21" cy="22" r="2.600"/><circle cx="31" cy="22" r="2.600"/></g></svg></div>
    <div class="w-[82px] flex items-center justify-center"><svg class="w-[44px] h-[44px]" viewBox="0 0 44 44"><circle cx="22" cy="22" r="22" fill="#2ca0d4"/><path d="M8 22l26-11-5 24-8-6-5 4v-8z" fill="#fff"/><path d="M16 25l14-11-10 14-1 5z" fill="#c4dcea"/></svg></div>
    <div class="w-[82px] flex items-center justify-center"><svg class="w-[44px] h-[48px]" viewBox="0 0 44 48"><circle cx="22" cy="22" r="21" fill="#84b53f"/><circle cx="22" cy="15" r="6" fill="#5b6e4b"/><path d="M22 18L6 46M22 18l15 28" stroke="#e9e9e9" stroke-width="3.400"/><path d="M10 29q12 10 24 0" fill="none" stroke="#e9e9e9" stroke-width="3.600"/></svg></div>
    <div class="w-[80px] flex items-center justify-center"><svg class="w-[46px] h-[48px]" viewBox="0 0 46 48"><circle cx="23" cy="24" r="23" fill="#101c2b"/><path d="M14 18c0-12 18-12 18 0 0 6-3 7-5 9l1 9-3 4v-8h-4v8l-3-4 1-9c-2-2-5-3-5-9z" fill="#27a79b"/><path d="M12 11C2 18 3 34 17 41M34 11c10 7 9 23-5 30M11 17c-2 9 2 14 7 18M35 17c2 9-2 14-7 18" fill="none" stroke="#1b857f" stroke-width="2.600"/></svg></div>
    <div class="w-[80px] flex items-center justify-center"><svg class="w-[44px] h-[46px]" viewBox="0 0 44 46"><path d="M22 7h21v30H22z" fill="#f5fff0"/><path d="M27 12h10v8h-10zM29 25h8v8h-8zM33 18v9" fill="#2e7526" stroke="#2e7526" stroke-width="2"/><path d="M0 5L27 0v46L0 40z" fill="#2f7a2a"/><text x="13" y="31" font-size="21" font-weight="700" fill="#fff" text-anchor="middle" font-family="Open Sans">P</text></svg></div>
    <div class="w-[78px] flex items-center justify-center"><svg class="w-[44px] h-[42px] mb-[2px]" viewBox="0 0 44 42"><rect x="1.500" y="1.500" width="41" height="39" fill="#0c1e33" stroke="#4fb0e0" stroke-width="3"/><text x="22" y="28" font-size="22" font-weight="700" fill="#56b8ec" text-anchor="middle" font-family="Open Sans" textLength="26" lengthAdjust="spacingAndGlyphs">Ps</text></svg></div>
    <div class="w-[82px] flex items-center justify-center"><svg class="w-[48px] h-[48px]" viewBox="0 0 48 48"><rect width="48" height="48" rx="5" fill="url(#gNavy)"/><path d="M15 32V28c-4-7-7-14-8-20 9-2 16 2 20 8 4 5 8 7 9 14l7 9-8-4M15 26l4 4" fill="none" stroke="#cfe0ec" stroke-width="1.800"/><path d="M33 5l4 3 4-1 2 6-7-2z" fill="#fff"/></svg></div>
    <div class="relative w-[80px] flex items-center justify-center"><svg class="w-[48px] h-[48px]" viewBox="0 0 48 48"><path d="M0 0h45l3 4v44H3l-3-3z" fill="#1f46c2"/><path d="M14 0h22v16H14z" fill="#cfcfda"/><path d="M26 3h6v11h-6z" fill="#1f3aa2"/><path d="M7 20h34v25H7z" fill="#f8ece8"/><path d="M9 26h30M9 32h30M9 38h17" stroke="#e08b86" stroke-width="1.800"/><text x="33" y="43" font-size="10" font-weight="700" fill="#222" text-anchor="middle" font-family="Open Sans">51</text><path d="M4 45h40v3H4z" fill="#a04048"/></svg><div class="absolute left-[10px] bottom-0 w-[62px] h-[4px] bg-[#76b9ed]"></div></div>
    <div class="w-[80px] flex items-center justify-center"><svg class="w-[48px] h-[46px]" viewBox="0 0 48 46"><path d="M34 0l13 5v36l-13 5L15 28 4 36l-4-3V13l4-3 11 8zM34 14L22 23l12 9zM5 17v12l6-6z" fill="#1779c4" fill-rule="evenodd"/><path d="M35 14L23 23l12 9zM5 17v12l6-6z" fill="#eef6fc"/></svg></div>
    <div class="w-[80px] flex items-center justify-center"><svg class="w-[44px] h-[38px]" viewBox="0 0 44 38"><path d="M1 1h17l3 4h22v32H1z" fill="#f8dd86"/><path d="M1 1h17v5H1z" fill="#e8b93c"/><path d="M8 38V25c0-3 2-5 4-5h20c2 0 4 2 4 5v13h-8V28H16v10z" fill="#40aee0"/></svg></div>
    <div class="relative w-[80px] flex items-center justify-center"><svg class="w-[46px] h-[46px]" viewBox="0 0 46 46"><path d="M24 6h21v34H24z" fill="#f3fff7"/><path d="M28 10h5M36 10h6M28 16h5M36 16h6M28 22h5M36 22h6M28 28h5M36 28h6M28 34h5M36 34h6" stroke="#217346" stroke-width="3.600"/><path d="M0 5L28 0v46L0 40z" fill="#207245"/><text x="13" y="30" font-size="20" font-weight="700" fill="#fff" text-anchor="middle" font-family="Open Sans">X</text></svg><div class="absolute left-[10px] bottom-0 w-[44px] h-[4px] bg-[#76b9ed]"></div><div class="absolute left-[54px] bottom-0 w-[18px] h-[4px] bg-[#5585ac]"></div></div>
    <div class="w-[80px] flex items-center justify-center"><svg class="w-[42px] h-[42px]" viewBox="0 0 42 42"><circle cx="21" cy="21" r="20" fill="#fbab18" stroke="#120d05" stroke-width="2"/><path d="M21 12l9 16H12zM21 20v8" fill="none" stroke="#1b1508" stroke-width="4.500"/></svg></div>
    <div class="relative w-[80px] flex items-center justify-center"><svg class="w-[38px] h-[36px]" viewBox="0 0 38 36"><path d="M0 0h37v21L22 36H0z" fill="#f3e796"/><path d="M22 20h15L22 36z" fill="#8d874f"/></svg><div class="absolute left-[10px] bottom-0 w-[62px] h-[4px] bg-[#76b9ed]"></div></div>
    <div class="w-[80px] flex items-center justify-center"><svg class="w-[48px] h-[48px]" viewBox="0 0 48 48"><rect width="48" height="48" rx="4" fill="#f0f3f7"/><path d="M3 14L24 8 20 27l23-2-1 6-31 6 6-20-12 5z" fill="#e8282c"/></svg></div>
    <div class="w-[80px] flex items-center justify-center"><svg class="w-[44px] h-[44px]" viewBox="0 0 44 44"><circle cx="22" cy="22" r="22" fill="url(#gBlue)"/><path d="M9 7c-2 16 8 28 26 29C19 32 11 22 9 7zM17 7c0 13 7 22 21 25C26 27 19 18 17 7z" fill="#fff" stroke="#fff" stroke-width="1.500"/></svg></div>
    <div class="relative w-[78px] flex items-center justify-center"><svg class="w-[42px] h-[46px]" viewBox="0 0 42 46"><path d="M20 0c13 0 22 7 21 17-1 9-9 14-16 16-4 4-6 10-17 13 5-4 5-10 4-15C5 28 0 22 0 15 1 6 9 0 20 0z" fill="url(#gGold)"/><path d="M11 12l22-2M10 18l22-2M12 24l16-2" stroke="#b8801c" stroke-width="2"/></svg><div class="absolute left-[9px] bottom-0 w-[62px] h-[4px] bg-[#76b9ed]"></div></div>
    <div class="w-[80px] flex items-center justify-center"><svg class="w-[42px] h-[46px]" viewBox="0 0 42 46"><path d="M21 0l20 11v24L21 46 1 35V11z" fill="#2a2d33" stroke="#141619" stroke-width="2"/><text x="21" y="29" font-size="19" fill="#1b7f8f" font-weight="600" text-anchor="middle" font-family="Lato" textLength="34" lengthAdjust="spacingAndGlyphs">nox</text></svg></div>
    <div class="relative w-[80px] flex items-center justify-center"><svg class="w-[46px] h-[48px]"><use href="#fox"/></svg><div class="absolute left-[10px] bottom-0 w-[62px] h-[4px] bg-[#76b9ed]"></div></div>
    <div class="relative w-[80px] flex items-center justify-center"><svg class="w-[44px] h-[48px]" viewBox="0 0 44 48"><path d="M1 1h28l8 8v38H1z" fill="url(#gGreen)" stroke="#b9bdb5" stroke-width="2"/><path d="M2 3h24" stroke="#888" stroke-width="3" stroke-dasharray="3 2"/><path d="M11 27V14h3v13M17 21h4M23 21h4" stroke="#333" stroke-width="2.400" fill="none"/><path d="M38 2l5 3-13 31-4 1 1-5z" fill="#e3a33a"/><path d="M39 0l5 3-2 3-5-3z" fill="#8c5248"/></svg><div class="absolute left-[10px] bottom-0 w-[62px] h-[4px] bg-[#76b9ed]"></div></div>

    <div class="flex items-center ml-[19px] shrink-0">
      <svg class="w-[26px] h-[16px]" viewBox="0 0 26 16"><path d="M2 14L13 2.500 24 14" fill="none" stroke="#fff" stroke-width="2.500"/></svg>
      <svg class="ml-[20px] mt-[3px] w-[30px] h-[18px]" viewBox="0 0 30 18"><path d="M1 1h25v16H1zM27 6h2v6h-2" fill="none" stroke="#fff" stroke-width="2"/><path d="M4 4h10v10H4z" fill="#fff"/></svg>
      <svg class="ml-[22px] mt-[5px] w-[26px] h-[26px]" viewBox="0 0 26 26"><g fill="none" stroke="#e4e4e4" stroke-width="2.200"><path d="M1 25C1 12 11 1 25 1"/><path d="M7 25C7 15 15 7 25 7"/><path d="M13 25C13 18 18 13 25 13"/></g><circle cx="22" cy="22" r="3.600" fill="#fff"/></svg>
      <svg class="ml-[15px] w-[34px] h-[26px]" viewBox="0 0 34 26"><g fill="none" stroke="#fff" stroke-width="2"><path d="M1 9h5l7-7v22l-7-7H1z"/><path d="M17 9q2.500 4 0 8M21 6q5 7 0 14"/><path d="M26 2q8 11 0 22" stroke="#8a8a8a"/></g></svg>
    </div>
    <div class="ml-[24px] w-[71px] flex items-center text-[21.500px] tracking-[-0.600px]">ESP</div>
    <div class="w-[96px] flex flex-col items-center justify-center text-[22.500px] leading-[35px] pb-[2px] tracking-[-0.600px]"><span>15:47</span><span>9/2/2018</span></div>
    <svg class="ml-[40px] mt-[22px] w-[54px] h-[54px] shrink-0" viewBox="0 0 54 54"><path d="M0 2h34v26H18l-7 6v-6H0z" fill="#fff"/><path d="M5 9h24M5 15h24M5 21h18" stroke="#1f1d1e" stroke-width="2"/><circle cx="32" cy="33" r="16" fill="#333" stroke="#858585" stroke-width="2"/><text x="32" y="41" font-size="22" fill="#fff" text-anchor="middle" font-family="Open Sans">1</text></svg>
    <div class="absolute right-[8px] top-0 w-[1px] h-[80px] bg-[#6d6d6d]"></div>
  </div>
</div>
</body>
</html>
